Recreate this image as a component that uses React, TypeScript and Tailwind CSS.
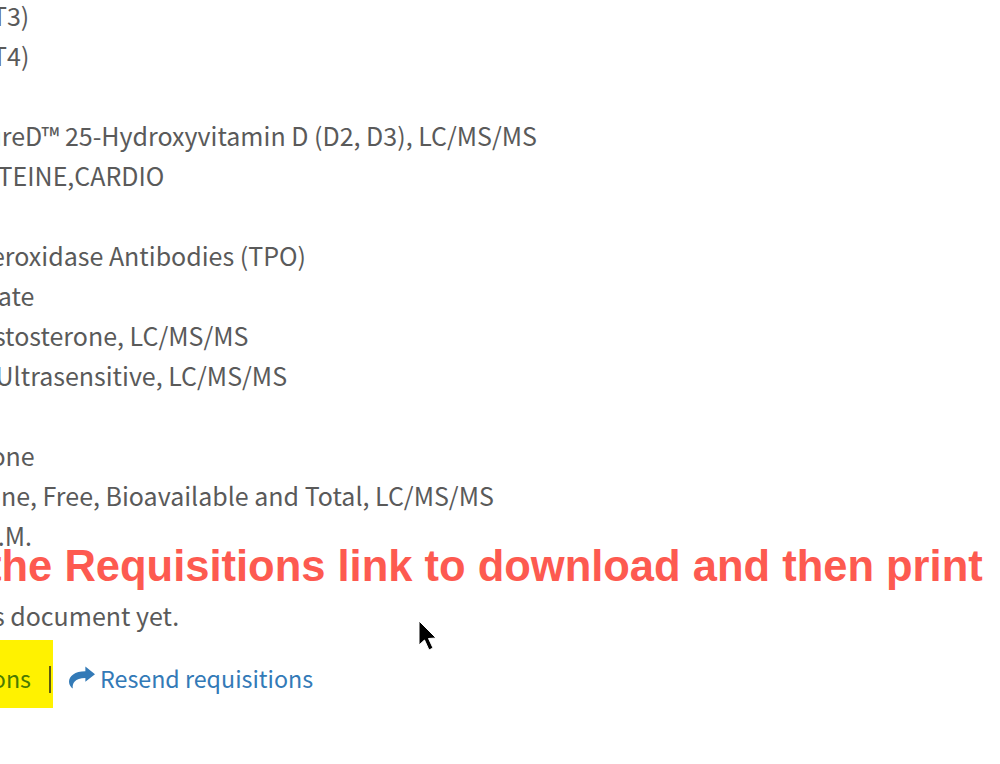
const font = "[font-family:'Noto_Sans_CJK_SC','Noto_Sans',sans-serif]";

function Row({ text, shift }: { text?: string; shift?: string }) {
  return (
    <div className={`h-10 leading-10 whitespace-nowrap ${shift ?? ""}`}>{text}</div>
  );
}

export default function App() {
  return (
    <div className={`relative w-[1000px] h-[764px] overflow-hidden bg-white text-[#5a5a5a] text-[25px] ${font}`}>
      <div className="-mt-[5px]">
        <Row text="Triiodothyronine (T3)" shift="-ml-[218px]" />
        <Row text="Thyroxine, Total (T4)" shift="-ml-[208px]" />
        <Row />
        <Row text="Vitamin D, QuantaSureD™ 25-Hydroxyvitamin D (D2, D3), LC/MS/MS" shift="-ml-[239px]" />
        <Row text="HOMOCYSTEINE,CARDIO" shift="-ml-[121px]" />
        <Row />
        <Row text="Thyroid Peroxidase Antibodies (TPO)" shift="-ml-[120px]" />
        <Row text="DHEA Sulfate" shift="-ml-[118px]" />
        <Row text="Free Testosterone, LC/MS/MS" shift="-ml-[89px]" />
        <Row text="Estradiol, Ultrasensitive, LC/MS/MS" shift="-ml-[120px]" />
        <Row />
        <Row text="Progesterone" shift="-ml-[121px]" />
        <Row text="Testosterone, Free, Bioavailable and Total, LC/MS/MS" shift="-ml-[120px]" />
        <Row text="Before 10 A.M." shift="-ml-[133px]" />
      </div>
      <div className="-mt-[13px] h-[48px] leading-[48px] whitespace-nowrap -ml-[129px] text-[43.5px] font-bold text-[#fd5a50] [font-family:'Liberation_Sans',sans-serif]">
        Click the Requisitions link to download and then print
      </div>
      <Row text="You have not viewed this document yet." shift="-ml-[282px] mt-[5px]" />
      <div className="flex items-center h-[68px] mt-[5px] -ml-[200px] whitespace-nowrap text-[23.25px]">
        <div className="flex items-center h-full w-[253px] justify-end bg-[#fff200] pr-[2px]">
          <span className="text-[#4a7a00] pt-[8px]">View Requisitions</span>
          <span className="ml-[18px] mt-[10px] w-[2px] h-[27px] bg-[#5f5a10]" />
        </div>
        <svg className="ml-[16px] mt-[8px]" width="26" height="24" viewBox="0 0 27 24">
          <path
            d="M27 8 L17 0 L17 5 C6 5 0 10 0 16 C0 19 2 22 4 23 C3 18 6 12 17 12 L17 16 Z"
            fill="#337ab7"
          />
        </svg>
        <span className="ml-[5px] text-[#337ab7] pt-[8px]">Resend requisitions</span>
      </div>
      <svg className="absolute left-[416px] top-[620px]" width="24" height="36" viewBox="0 0 24 36">
        <path d="M3 1 L3 25 L8.5 20 L13 30 L17 28 L12.5 18.5 L20 18 Z" fill="#000" stroke="#fff" strokeWidth="1" />
      </svg>
    </div>
  );
}
